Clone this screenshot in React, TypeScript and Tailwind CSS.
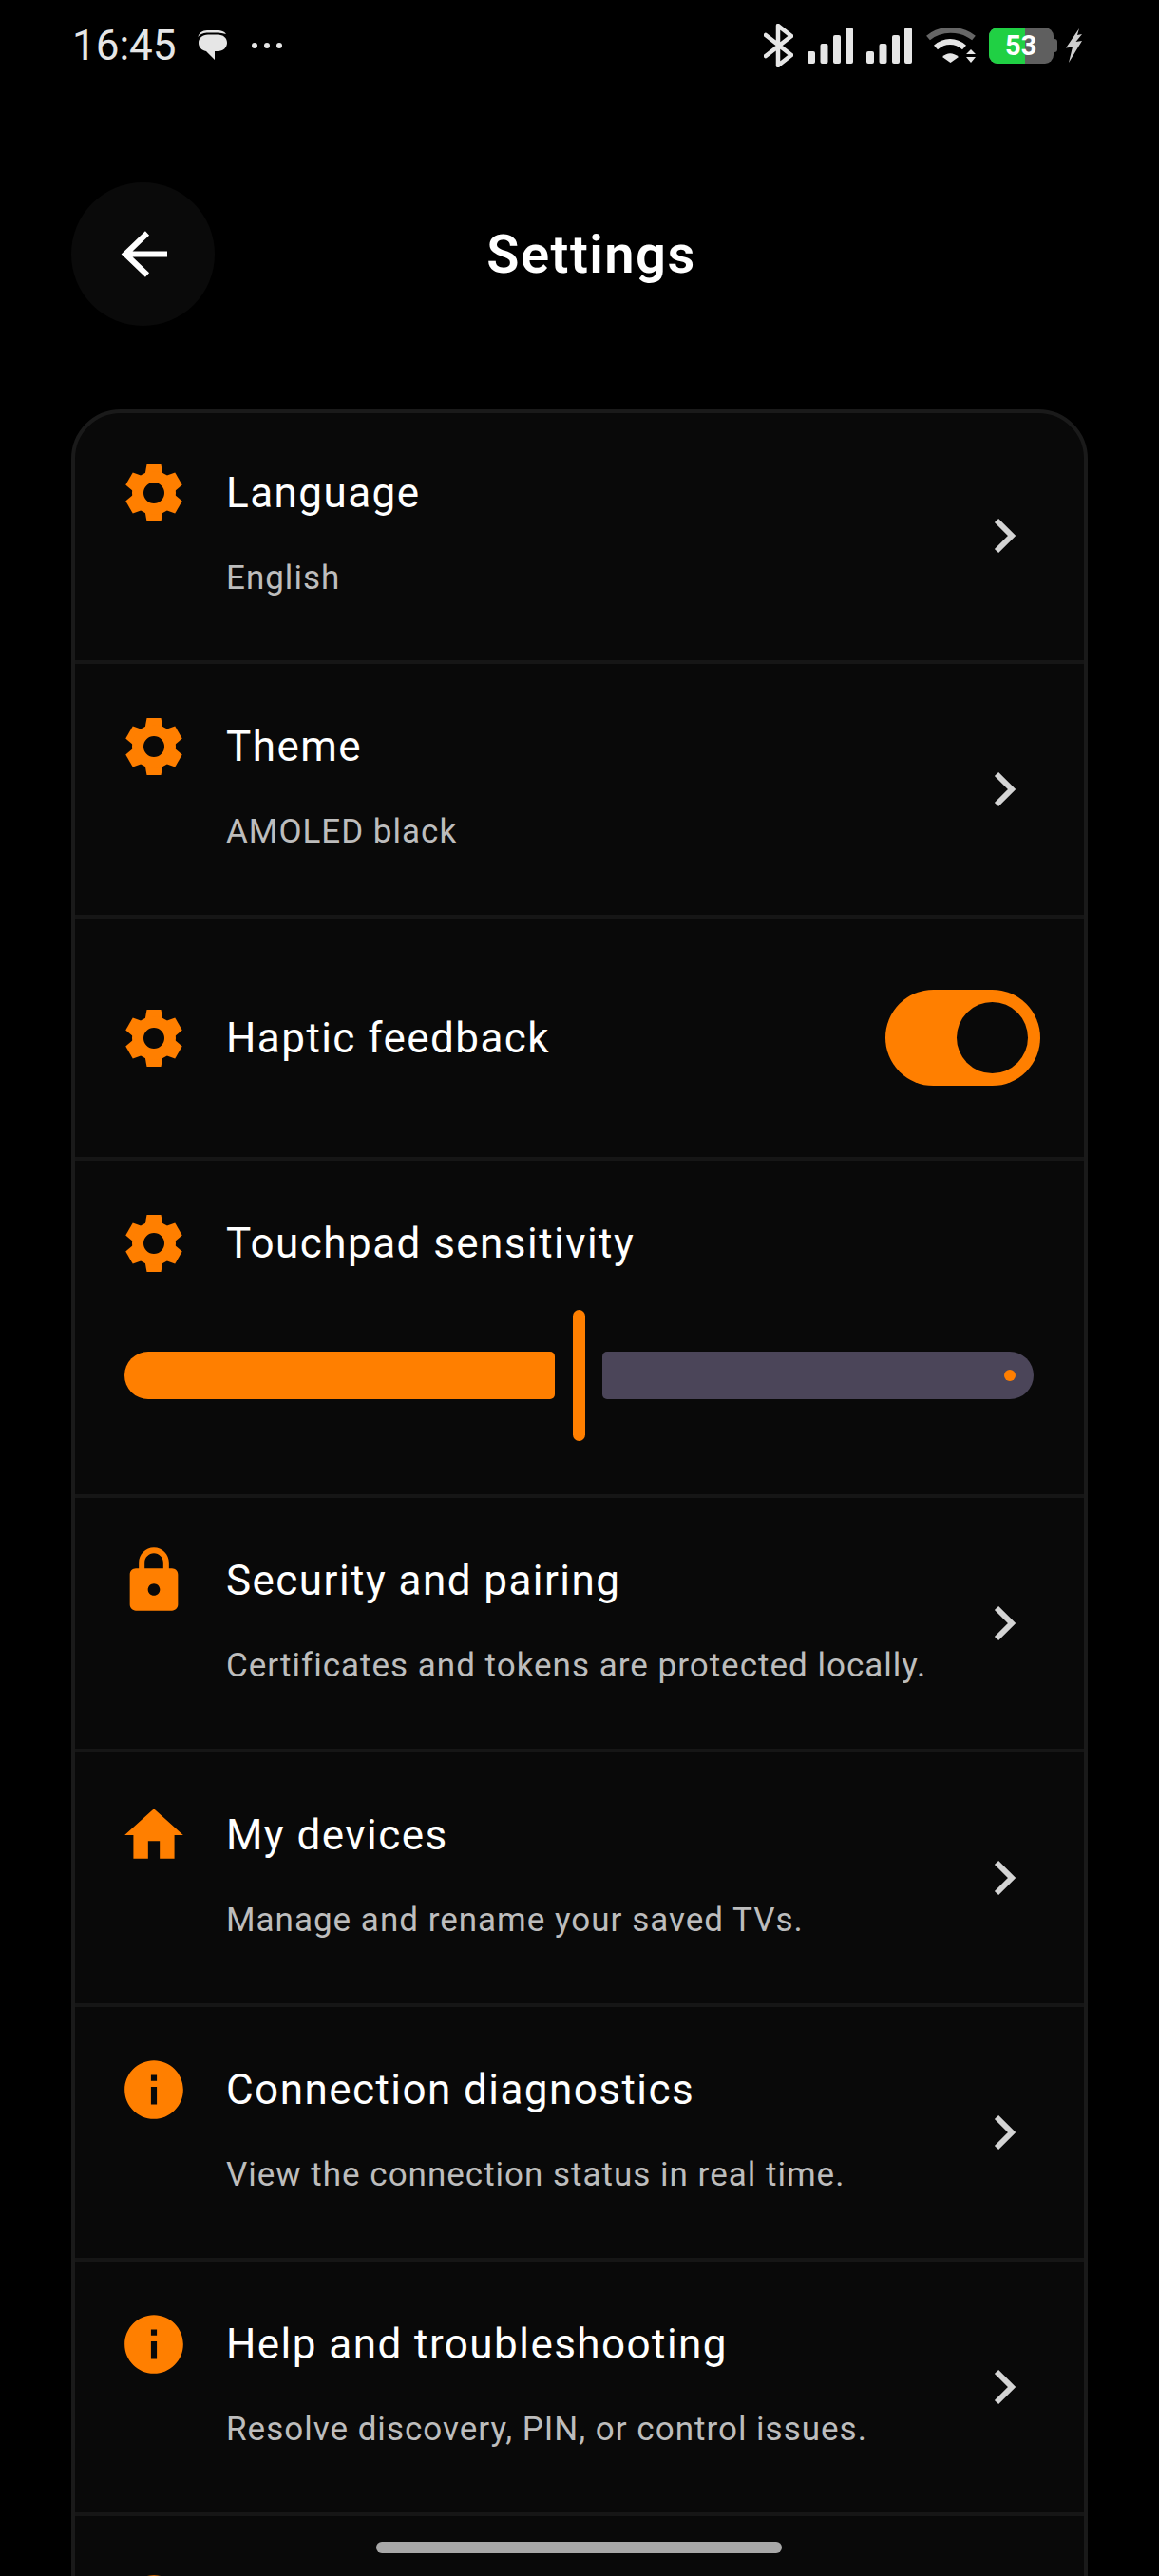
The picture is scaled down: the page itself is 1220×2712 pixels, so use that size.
import React from "react";

const ORANGE = "#ff7f00";

const GearIcon = () => (
  <svg viewBox="-32 -32 64 64" className="w-[64px] h-[64px] shrink-0" fill={ORANGE}>
    {[0, 60, 120, 180, 240, 300].map((angle) => (
      <path key={angle} d="M-7.500-30H7.500L9.500-19H-9.500Z" transform={`rotate(${angle})`} />
    ))}
    <path
      fillRule="evenodd"
      d="M0-23A23 23 0 1 1 0 23A23 23 0 1 1 0-23ZM0-11A11 11 0 1 0 0 11A11 11 0 1 0 0-11Z"
    />
  </svg>
);

const LockIcon = () => (
  <svg viewBox="0 0 24 24" className="w-[76px] h-[76px] shrink-0" fill={ORANGE}>
    <path d="M18 8h-1V6c0-2.76-2.24-5-5-5S7 3.240 7 6v2H6c-1.100 0-2 .9-2 2v10c0 1.100.9 2 2 2h12c1.100 0 2-.9 2-2V10c0-1.100-.9-2-2-2zm-6 9c-1.100 0-2-.9-2-2s.9-2 2-2 2 .9 2 2-.9 2-2 2zm3.100-9H8.900V6c0-1.710 1.390-3.100 3.100-3.100 1.710 0 3.100 1.390 3.100 3.100v2z" />
  </svg>
);

const HomeIcon = () => (
  <svg viewBox="0 0 24 24" className="w-[74px] h-[74px] shrink-0" fill={ORANGE}>
    <path d="M10 20v-6h4v6h5v-8h3L12 3 2 12h3v8z" />
  </svg>
);

const InfoIcon = () => (
  <svg viewBox="0 0 24 24" className="w-[74px] h-[74px] shrink-0" fill={ORANGE}>
    <path d="M12 2C6.480 2 2 6.480 2 12s4.480 10 10 10 10-4.480 10-10S17.520 2 12 2zm1 15h-2v-6h2v6zm0-8h-2V7h2v2z" />
  </svg>
);

const Chevron = () => (
  <svg viewBox="0 0 24 38" className="w-[24px] h-[38px] shrink-0" fill="none" stroke="#d4d4d4" strokeWidth="6">
    <path d="M3 3l16 16L3 35" />
  </svg>
);

const SignalBars = ({ className }: { className: string }) => (
  <svg viewBox="0 0 48 38" className={className} fill="#e6e6e6">
    <rect x="0" y="25" width="8" height="13" rx="2" />
    <rect x="13.500" y="17" width="8" height="21" rx="2" />
    <rect x="27" y="8" width="8" height="30" rx="2" />
    <rect x="40" y="0" width="8" height="38" rx="2" />
  </svg>
);

const StatusBar = () => (
  <div className="flex items-center h-[96px] pl-[76px] pr-[81px] text-[#e6e6e6]">
    <span className="text-[44px] leading-none font-normal">16:45</span>
    <svg viewBox="0 0 32 32" className="ml-[22px] w-[32px] h-[32px] shrink-0" fill="#e6e6e6">
      <path d="M10 0h11c4 0 7 1 9 4-3-1-6-1.500-9-1.500H11C7 2.500 3 3.500.5 7 1 3 5 0 10 0z" />
      <path d="M11 4.500h10c6 0 10 3.500 10 8.500s-4 9-10 9h-3v9l-9-9C4 21 1 17.500 1 13s4-8.500 10-8.500z" />
    </svg>
    <span className="ml-[25px] flex gap-[7px]">
      <i className="block w-[6px] h-[6px] rounded-full bg-[#e6e6e6]" />
      <i className="block w-[6px] h-[6px] rounded-full bg-[#e6e6e6]" />
      <i className="block w-[6px] h-[6px] rounded-full bg-[#e6e6e6]" />
    </span>
    <svg viewBox="0 0 31 46" className="ml-auto w-[31px] h-[46px] shrink-0" fill="none" stroke="#e6e6e6" strokeWidth="4.500" strokeLinejoin="round" strokeLinecap="round">
      <path d="M2 12l27 21-14 11V2l14 11L2 34" />
    </svg>
    <SignalBars className="ml-[15px] w-[48px] h-[38px] shrink-0" />
    <SignalBars className="ml-[14px] w-[48px] h-[38px] shrink-0" />
    <svg viewBox="0 0 52 38" className="ml-[15px] w-[52px] h-[38px] shrink-0" fill="none">
      <path d="M2 11C15 0 36 0 50 11" stroke="#666" strokeWidth="6" />
      <path d="M10 21c9-8 21-8 30 0" stroke="#e6e6e6" strokeWidth="6" />
      <path d="M17 31c5-5 11-5 17 0l-8.500 6z" fill="#e6e6e6" />
      <path d="M42 28l5-5 5 5zM42 31h10l-5 6z" fill="#e6e6e6" />
    </svg>
    <div className="ml-[14px] flex items-center">
      <div className="relative w-[68px] h-[38px] rounded-[9px] overflow-hidden bg-[#5f5f5f]">
        <div className="h-full w-[38px] bg-[#20d044]" />
        <span className="absolute inset-0 pl-[17px] flex items-center text-[29px] font-bold leading-none text-white">53</span>
      </div>
      <div className="w-[4px] h-[14px] rounded-r-[3px] bg-[#5f5f5f]" />
    </div>
    <svg viewBox="0 0 17 36" className="ml-[9px] w-[17px] h-[36px] shrink-0" fill="#cfcfcf">
      <path d="M14 0L0 20.500 7 19.500 3 36 17 13 10.500 14 17 6 12 7z" />
    </svg>
  </div>
);

const Header = () => (
  <div className="flex items-center mt-[96px] px-[75px]">
    <button className="w-[151px] h-[151px] shrink-0 rounded-full bg-[#0a0a0a] flex items-center justify-center">
      <svg viewBox="0 0 50 50" className="w-[50px] h-[50px]" fill="none" stroke="#fff" strokeWidth="6">
        <path d="M50 24.500H5M29 2.500L6 24.500l23 22" />
      </svg>
    </button>
    <h1 className="flex-1 text-center pr-[126px] text-[56px] leading-none font-semibold tracking-[1.5px] text-white">Settings</h1>
  </div>
);

type RowProps = {
  icon: React.ReactNode;
  title: string;
  subtitle: string;
};

const LinkRow = ({ icon, title, subtitle }: RowProps) => (
  <div className="flex h-[268px] first:h-[264px] border-b-[4px] border-[#161616] pl-[51px] pr-[71px] pt-[55px] first:pt-[52px]">
    <div className="w-[64px] h-[64px] flex items-center justify-center shrink-0">{icon}</div>
    <div className="ml-[44px] flex-1">
      <div className="text-[44px] leading-[64px] tracking-[1.45px] text-white">{title}</div>
      <div className="mt-[33px] text-[35px] leading-[50px] tracking-[1px] text-[#bdbdbd]">{subtitle}</div>
    </div>
    <div className="self-center -mt-[55px]">
      <Chevron />
    </div>
  </div>
);

const Switch = () => (
  <div className="w-[163px] h-[101px] rounded-full bg-[#ff7f00] flex items-center justify-end pr-[13px]">
    <div className="w-[75px] h-[75px] rounded-full bg-[#090909]" />
  </div>
);

const HapticRow = () => (
  <div className="flex items-center h-[255px] border-b-[4px] border-[#161616] pl-[51px] pr-[46px]">
    <GearIcon />
    <div className="ml-[44px] flex-1 text-[44px] tracking-[1.45px] text-white">Haptic feedback</div>
    <Switch />
  </div>
);

const SensitivityRow = () => (
  <div className="h-[355px] border-b-[4px] border-[#161616] pl-[51px] pr-[53px] pt-[55px]">
    <div className="flex items-center">
      <GearIcon />
      <div className="ml-[44px] text-[44px] leading-[64px] tracking-[1.45px] text-white">Touchpad sensitivity</div>
    </div>
    <div className="mt-[38px] ml-px flex items-center h-[138px]">
      <div className="w-[453px] h-[50px] rounded-l-[25px] rounded-r-[5px] bg-[#ff7f00]" />
      <div className="ml-[19px] w-[13px] h-[138px] rounded-full bg-[#ff7f00]" />
      <div className="relative ml-[18px] flex-1 h-[50px] rounded-r-[25px] rounded-l-[5px] bg-[#4b4559]">
        <div className="absolute right-[19px] top-[19px] w-[12px] h-[12px] rounded-full bg-[#ff7f00]" />
      </div>
    </div>
  </div>
);

export default function App() {
  return (
    <div className="relative w-[1220px] h-[2712px] overflow-hidden bg-black font-['Roboto',sans-serif]">
      <StatusBar />
      <Header />
      <div className="mx-[75px] mt-[88px] rounded-t-[52px] border-[4px] border-[#1a1a1a] bg-[#090909]">
        <LinkRow icon={<GearIcon />} title="Language" subtitle="English" />
        <LinkRow icon={<GearIcon />} title="Theme" subtitle="AMOLED black" />
        <HapticRow />
        <SensitivityRow />
        <LinkRow icon={<LockIcon />} title="Security and pairing" subtitle="Certificates and tokens are protected locally." />
        <LinkRow icon={<HomeIcon />} title="My devices" subtitle="Manage and rename your saved TVs." />
        <LinkRow icon={<InfoIcon />} title="Connection diagnostics" subtitle="View the connection status in real time." />
        <LinkRow icon={<InfoIcon />} title="Help and troubleshooting" subtitle="Resolve discovery, PIN, or control issues." />
        {/* next row starts below the fold, only the top of its icon shows */}
        <div className="flex h-[268px] pl-[51px] pt-[61px]">
          <div className="w-[64px] h-[64px] flex items-center justify-center shrink-0">
            <InfoIcon />
          </div>
        </div>
      </div>
      <div className="absolute left-[396px] top-[2676px] w-[427px] h-[12px] rounded-full bg-[#a8a8a8]" />
    </div>
  );
}
